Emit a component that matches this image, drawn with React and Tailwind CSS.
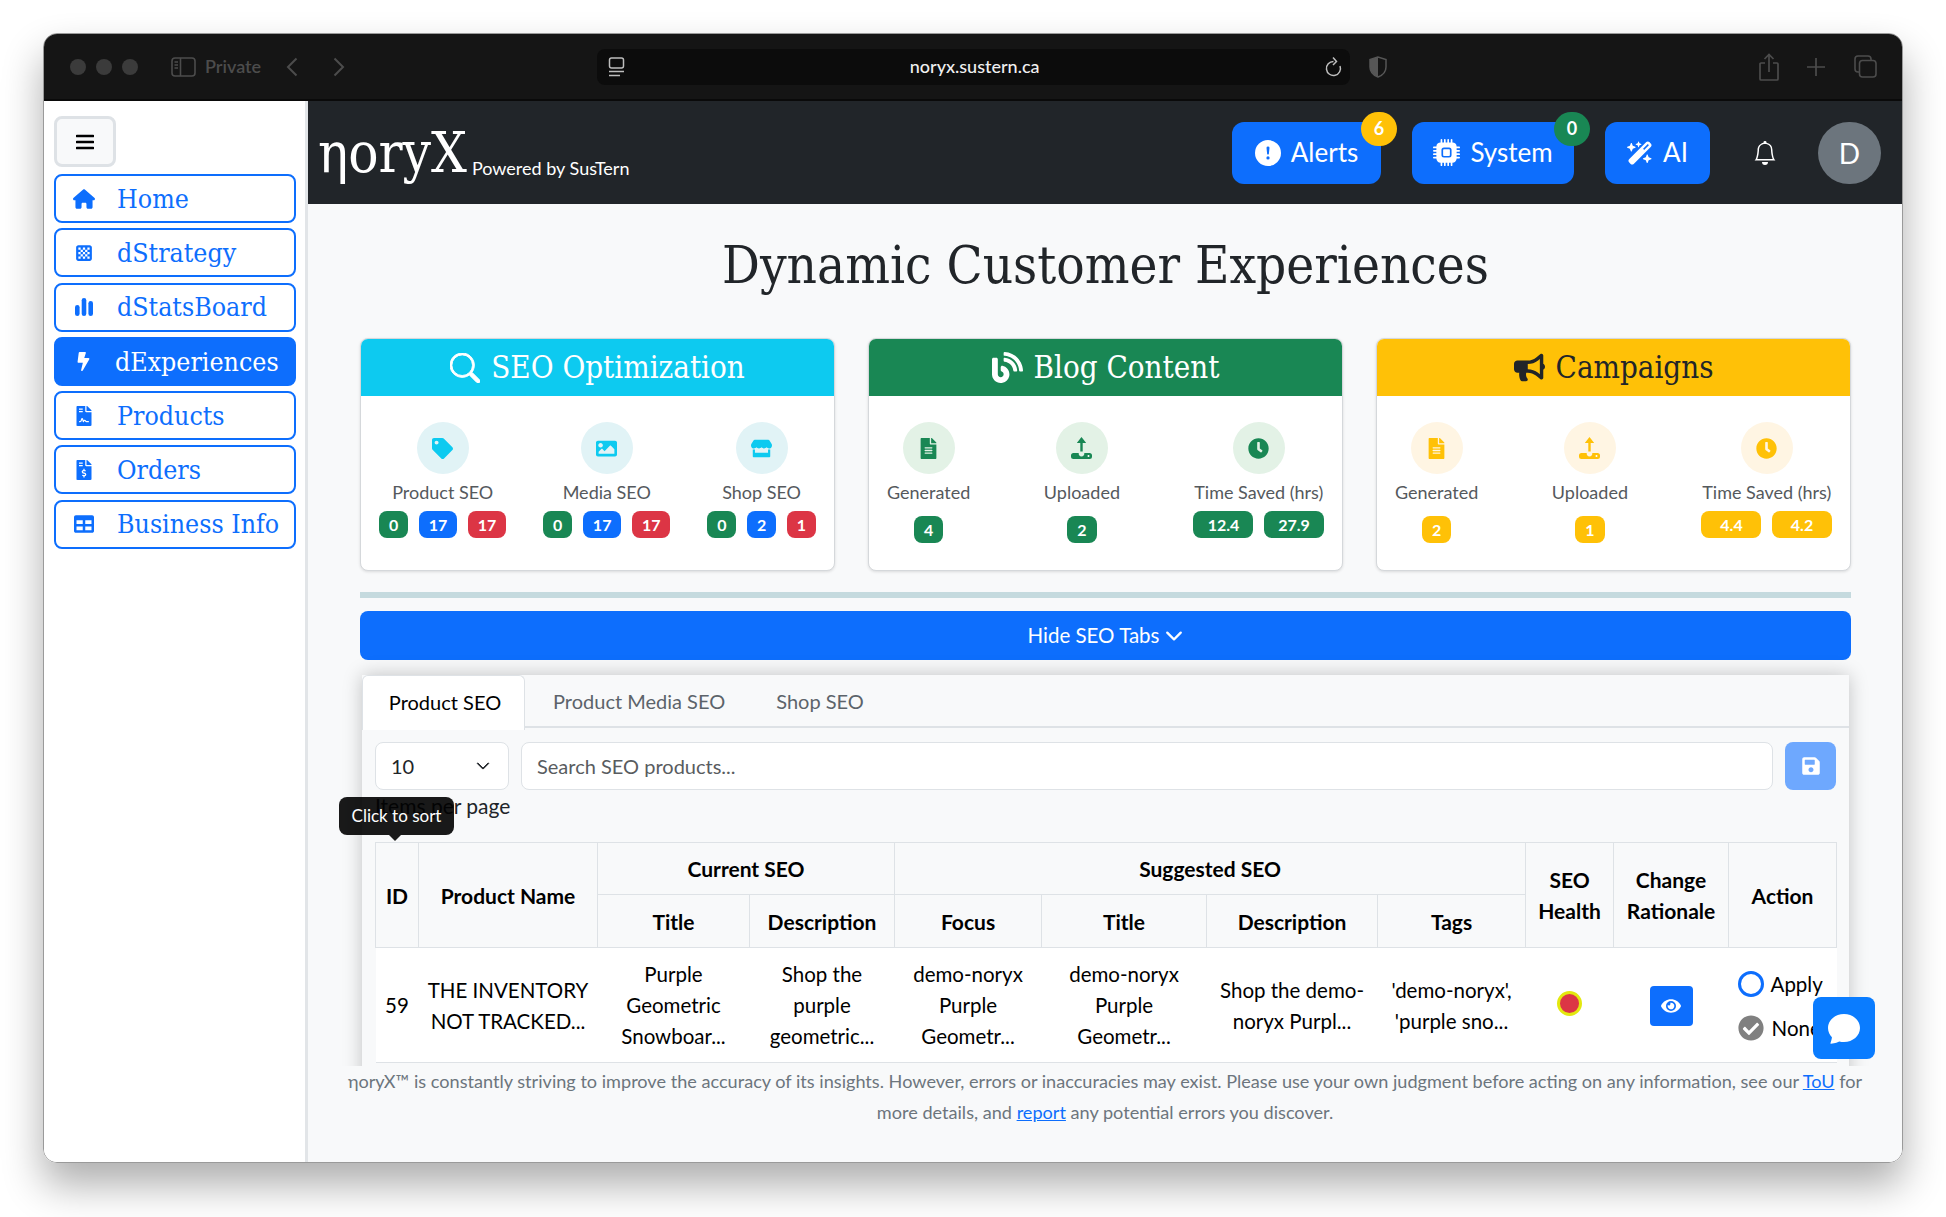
import { FaTag, FaImage, FaStore, FaFileAlt, FaClock, FaBlog, FaBullhorn, FaSave, FaEye, FaCheckCircle, FaFileContract, FaFileInvoiceDollar, FaTable, FaBolt } from 'react-icons/fa';
import { FaHouse, FaChessBoard, FaWandMagicSparkles } from 'react-icons/fa6';
import { BsBell, BsSearch, BsChevronDown, BsChatFill, BsCpuFill, BsExclamationCircleFill } from 'react-icons/bs';

const serif = "[font-family:'DejaVu_Serif_Condensed','DejaVu_Serif',serif]";

const nav = [
    { label: 'Home', icon: <FaHouse size={22} /> },
    { label: 'dStrategy', icon: <FaChessBoard size={18} /> },
    { label: 'dStatsBoard', icon: <StatsIcon /> },
    { label: 'dExperiences', icon: <FaBolt size={19} />, active: true },
    { label: 'Products', icon: <FaFileContract size={20} /> },
    { label: 'Orders', icon: <FaFileInvoiceDollar size={20} /> },
    { label: 'Business Info', icon: <FaTable size={20} /> },
];

function StatsIcon() {
    return (
        <svg width="18" height="18" viewBox="0 0 18 18" fill="currentColor">
            <rect x="0" y="7" width="4.6" height="11" rx="2.3" />
            <rect x="6.7" y="0" width="4.6" height="18" rx="2.3" />
            <rect x="13.4" y="3" width="4.6" height="15" rx="2.3" />
        </svg>
    );
}

function UploadIcon() {
    return (
        <svg width="21" height="22" viewBox="0 0 21 22" fill="currentColor">
            <path d="M9.300 14.500V6H5.800L10.500 0l4.700 6h-3.500v8.500z" />
            <path d="M2.500 16h5.200v.6a2.800 2.800 0 0 0 5.600 0V16h5.200a2.500 2.500 0 0 1 2.500 2.500v1a2.500 2.500 0 0 1-2.500 2.500h-16A2.500 2.500 0 0 1 0 19.500v-1A2.500 2.500 0 0 1 2.500 16z" />
            <circle cx="17.500" cy="19" r="1" fill="#fff" />
        </svg>
    );
}

function Toolbar() {
    return (
        <div className="flex h-[67px] flex-none items-center border-b-2 border-[#0a0a0a] bg-[#151515] text-[#4c4c4c]">
            <span className="ml-[26px] h-4 w-4 rounded-full bg-[#3b3b3b]" />
            <span className="ml-[10px] h-4 w-4 rounded-full bg-[#3b3b3b]" />
            <span className="ml-[10px] h-4 w-4 rounded-full bg-[#3b3b3b]" />
            <svg className="ml-[33px]" width="25" height="20" viewBox="0 0 25 20" fill="none" stroke="currentColor" strokeWidth="1.6">
                <rect x="1" y="1" width="23" height="18" rx="3" />
                <path d="M9.5 1v18M3.5 5h3.5M3.5 8h3.5M3.5 11h3.5" />
            </svg>
            <span className="ml-[9px] text-[18px] font-semibold">Private</span>
            <svg className="ml-[25px]" width="12" height="20" viewBox="0 0 12 20" fill="none" stroke="currentColor" strokeWidth="2"><path d="M10.5 1.5 2 10l8.5 8.5" /></svg>
            <svg className="ml-[35px]" width="12" height="20" viewBox="0 0 12 20" fill="none" stroke="currentColor" strokeWidth="2"><path d="M1.5 1.5 10 10l-8.5 8.5" /></svg>
            <div className="ml-[252px] flex h-[36px] w-[753px] items-center justify-between rounded-lg bg-[#0c0c0c] pl-[11px] pr-[8px] text-[#bdbdbd]">
                <svg width="17" height="20" viewBox="0 0 17 20" fill="none" stroke="currentColor" strokeWidth="1.5">
                    <rect x="1.5" y="1" width="14" height="10" rx="2" />
                    <path d="M1 14.5h15M1 18.5h11" />
                </svg>
                <span className="text-[18px] font-medium text-[#f0f0f0]">noryx.sustern.ca</span>
                <svg width="18" height="22" viewBox="0 0 18 22" fill="none" stroke="currentColor" strokeWidth="1.5">
                    <path d="M9.5 5.5a7 7 0 1 0 6.5 4.5M9 1.5l3.5 4-3.5 3.5" />
                </svg>
            </div>
            <svg className="ml-[19px]" width="18" height="22" viewBox="0 0 18 22">
                <path d="M9 1 1 3.5V11c0 5 4 8.500 8 10 4-1.500 8-5 8-10V3.500z" fill="none" stroke="#565656" strokeWidth="1.500" />
                <path d="M9 1 1 3.500V11c0 5 4 8.500 8 10z" fill="#565656" />
            </svg>
            <svg className="ml-auto" width="20" height="28" viewBox="0 0 20 28" fill="none" stroke="currentColor" strokeWidth="1.7">
                <path d="M6 10H2a1 1 0 0 0-1 1v15a1 1 0 0 0 1 1h16a1 1 0 0 0 1-1V11a1 1 0 0 0-1-1h-4M10 19V1.500M5.500 6 10 1.500 14.500 6" />
            </svg>
            <svg className="ml-[28px]" width="18" height="18" viewBox="0 0 18 18" fill="none" stroke="currentColor" strokeWidth="1.700"><path d="M9 0v18M0 9h18" /></svg>
            <svg className="ml-[29px] mr-[25px]" width="23" height="23" viewBox="0 0 23 23" fill="none" stroke="currentColor" strokeWidth="1.600">
                <rect x="5.500" y="5.500" width="16.500" height="16.500" rx="3" />
                <path d="M5.500 17H4a3 3 0 0 1-3-3V4a3 3 0 0 1 3-3h10a3 3 0 0 1 3 3v1.500" />
            </svg>
        </div>
    );
}

function Sidebar() {
    return (
        <aside className="flex w-[264px] flex-none flex-col border-r-[3px] border-[#e2e5e8] bg-white pl-[10px] pt-[15px]">
            <button className="flex h-[51px] w-[62px] items-center justify-center rounded-lg border-[3px] border-[#dee2e6] bg-[#f8f9fa] text-black">
                <svg width="18" height="16" viewBox="0 0 18 16" fill="none" stroke="currentColor" strokeWidth="2.600" strokeLinecap="round">
                    <path d="M1 2h16M1 8h16M1 14h16" />
                </svg>
            </button>
            <div className="mt-[7px] flex w-[242px] flex-col gap-[5.300px]">
                {nav.map(n => (
                    <div key={n.label} className={`flex h-[49px] items-center rounded-lg border-2 border-[#0d6efd] ${n.active ? 'bg-[#0d6efd] text-white' : 'bg-white text-[#0d6efd]'}`}>
                        <span className="flex w-[61px] flex-none justify-center pr-[6px]">{n.icon}</span>
                        <span className={`${serif} text-[26.500px] ${n.active ? '-ml-[2px]' : ''}`}>{n.label}</span>
                    </div>
                ))}
            </div>
        </aside>
    );
}

function HeaderBtn({ icon, label, width, badge, badgeColor }) {
    return (
        <div className={`relative flex h-[62px] items-center justify-center gap-[10px] rounded-xl bg-[#0d6efd] text-[26px] text-white ${width}`}>
            {icon}
            <span>{label}</span>
            {badge !== undefined && (
                <span className={`absolute -right-[16px] -top-[10px] flex h-[34px] w-[36px] items-center justify-center rounded-full text-[18px] font-bold ${badgeColor}`}>{badge}</span>
            )}
        </div>
    );
}

function Header() {
    return (
        <header className="flex h-[103px] flex-none items-center bg-[#212529] pr-[21px] text-white">
            <div className="ml-[10px] flex items-baseline">
                <span className={`${serif} text-[56px] leading-none`}>ηoryX</span>
                <span className="ml-[5px] translate-y-[3px] text-[18px]">Powered by SusTern</span>
            </div>
            <div className="ml-auto flex items-center">
                <HeaderBtn icon={<BsExclamationCircleFill size={26} />} label="Alerts" width="w-[149px]" badge={6} badgeColor="bg-[#ffc107]" />
                <div className="ml-[31px]"><HeaderBtn icon={<BsCpuFill size={27} />} label="System" width="w-[162px]" badge={0} badgeColor="bg-[#198754]" /></div>
                <div className="ml-[31px]"><HeaderBtn icon={<FaWandMagicSparkles size={26} />} label="AI" width="w-[105px]" /></div>
                <BsBell className="ml-[43px]" size={24} />
                <div className="ml-[41px] flex h-[62px] w-[63px] items-center justify-center rounded-full bg-[#6c757d] text-[28px]">D</div>
            </div>
        </header>
    );
}

function Badge({ children, color, wide }) {
    return <span className={`flex h-[27px] items-center justify-center rounded-lg text-[16px] font-bold text-white ${color} ${wide || 'min-w-[29px] px-[10px]'}`}>{children}</span>;
}

function Stat({ icon, label, circle, iconColor, badges }) {
    return (
        <div className="flex flex-col items-center">
            <span className={`flex h-[52px] w-[52px] items-center justify-center rounded-full text-[21px] ${circle} ${iconColor}`}>{icon}</span>
            <span className="mt-[5px] h-[26px] whitespace-nowrap text-[18px] leading-[26px] text-[#55595d]">{label}</span>
            <div className={`flex gap-[10.500px] ${badges.length === 1 ? 'mt-[11px]' : 'mt-[6px]'}`}>{badges}</div>
        </div>
    );
}

function Card({ title, icon, head, children }) {
    return (
        <div className="h-[233px] overflow-hidden rounded-lg border border-[#d5d8db] bg-white shadow-[0_1px_3px_rgba(0,0,0,.12)]">
            <div className={`flex h-[57px] items-center justify-center gap-[11px] ${head}`}>
                {icon}
                <span className={`${serif} text-[31px]`}>{title}</span>
            </div>
            <div className="flex justify-between px-[18px] pt-[26px]">{children}</div>
        </div>
    );
}

function Cards() {
    const cyan = { circle: 'bg-[#e1f3f6]', iconColor: 'text-[#0dcaf0]' };
    const green = { circle: 'bg-[#e3f2e6]', iconColor: 'text-[#198754]' };
    const yellow = { circle: 'bg-[#fff5e3]', iconColor: 'text-[#ffc107]' };
    const g = 'bg-[#198754]', b = 'bg-[#0d6efd]', r = 'bg-[#dc3545]', y = 'bg-[#ffc107]';
    return (
        <div className="grid grid-cols-3 gap-[33px]">
            <Card title="SEO Optimization" head="bg-[#0dcaf0] text-white" icon={<BsSearch size={30} strokeWidth={0.5} />}>
                <Stat {...cyan} icon={<FaTag />} label="Product SEO" badges={[<Badge key="a" color={g}>0</Badge>, <Badge key="b" color={b}>17</Badge>, <Badge key="c" color={r}>17</Badge>]} />
                <Stat {...cyan} icon={<FaImage />} label="Media SEO" badges={[<Badge key="a" color={g}>0</Badge>, <Badge key="b" color={b}>17</Badge>, <Badge key="c" color={r}>17</Badge>]} />
                <Stat {...cyan} icon={<FaStore />} label="Shop SEO" badges={[<Badge key="a" color={g}>0</Badge>, <Badge key="b" color={b}>2</Badge>, <Badge key="c" color={r}>1</Badge>]} />
            </Card>
            <Card title="Blog Content" head="bg-[#198754] text-white" icon={<FaBlog size={31} />}>
                <Stat {...green} icon={<FaFileAlt />} label="Generated" badges={[<Badge key="a" color={g}>4</Badge>]} />
                <Stat {...green} icon={<UploadIcon />} label="Uploaded" badges={[<Badge key="a" color={g}>2</Badge>]} />
                <Stat {...green} icon={<FaClock />} label="Time Saved (hrs)" badges={[<Badge key="a" color={g} wide="w-[60px]">12.4</Badge>, <Badge key="b" color={g} wide="w-[60px]">27.9</Badge>]} />
            </Card>
            <Card title="Campaigns" head="bg-[#ffc107] text-[#212529]" icon={<FaBullhorn size={31} />}>
                <Stat {...yellow} icon={<FaFileAlt />} label="Generated" badges={[<Badge key="a" color={y}>2</Badge>]} />
                <Stat {...yellow} icon={<UploadIcon />} label="Uploaded" badges={[<Badge key="a" color={y}>1</Badge>]} />
                <Stat {...yellow} icon={<FaClock />} label="Time Saved (hrs)" badges={[<Badge key="a" color={y} wide="w-[60px]">4.4</Badge>, <Badge key="b" color={y} wide="w-[60px]">4.2</Badge>]} />
            </Card>
        </div>
    );
}

function SeoTable() {
    const th = 'border border-[#dee2e6] bg-[#f8f9fa] px-[4px] align-middle text-[21px] font-bold text-black leading-[31px]';
    const td = 'whitespace-nowrap border-b border-[#dee2e6] bg-white px-[4px] pb-[10px] pt-[11px] text-center align-middle text-[20.500px] text-black leading-[31px]';
    return (
        <table className="w-[1461px] table-fixed border-collapse text-center">
            <colgroup>
                <col className="w-[43px]" />
                <col className="w-[179px]" />
                <col className="w-[152px]" />
                <col className="w-[145px]" />
                <col className="w-[147px]" />
                <col className="w-[165px]" />
                <col className="w-[171px]" />
                <col className="w-[148px]" />
                <col className="w-[88px]" />
                <col className="w-[115px]" />
                <col className="w-[108px]" />
            </colgroup>
            <thead>
                <tr className="h-[52px]">
                    <th rowSpan="2" className={th}>ID</th>
                    <th rowSpan="2" className={th}>Product Name</th>
                    <th colSpan="2" className={th}>Current SEO</th>
                    <th colSpan="4" className={th}>Suggested SEO</th>
                    <th rowSpan="2" className={th}>SEO<br />Health</th>
                    <th rowSpan="2" className={th}>Change<br />Rationale</th>
                    <th rowSpan="2" className={th}>Action</th>
                </tr>
                <tr className="h-[53px]">
                    <th className={th}>Title</th>
                    <th className={th}>Description</th>
                    <th className={th}>Focus</th>
                    <th className={th}>Title</th>
                    <th className={th}>Description</th>
                    <th className={th}>Tags</th>
                </tr>
            </thead>
            <tbody>
                <tr>
                    <td className={td}>59</td>
                    <td className={td}>THE INVENTORY<br />NOT TRACKED...</td>
                    <td className={td}>Purple<br />Geometric<br />Snowboar...</td>
                    <td className={td}>Shop the<br />purple<br />geometric...</td>
                    <td className={td}>demo-noryx<br />Purple<br />Geometr...</td>
                    <td className={td}>demo-noryx<br />Purple<br />Geometr...</td>
                    <td className={td}>Shop the demo-<br />noryx Purpl...</td>
                    <td className={td}>'demo-noryx',<br />'purple sno...</td>
                    <td className={td}>
                        <span className="-mt-[8px] inline-block h-[25px] w-[25px] rounded-full border-[3px] border-[#e3e80f] bg-[#dc3545] align-middle" />
                    </td>
                    <td className={td}>
                        <span className="inline-flex h-[40px] w-[43px] items-center justify-center rounded bg-[#0d6efd] align-middle text-white"><FaEye size={20} /></span>
                    </td>
                    <td className={`${td} !px-0`}>
                        <div className="flex flex-col gap-[18px] overflow-hidden pl-[9px] text-left">
                            <div className="flex items-center gap-[7px] whitespace-nowrap leading-[26px]">
                                <span className="h-[26px] w-[26px] flex-none rounded-full border-[3px] border-[#0d6efd] bg-white" />Apply
                            </div>
                            <div className="flex items-center gap-[8px] whitespace-nowrap leading-[26px]">
                                <FaCheckCircle className="flex-none text-[#808080]" size={26} />None
                            </div>
                        </div>
                    </td>
                </tr>
            </tbody>
        </table>
    );
}

function SeoPanel() {
    return (
        <div className="relative mx-[2px] mt-[15px] h-[500px] bg-[#f8f9fa] shadow-[0_0_18px_rgba(0,0,0,.22)]">
            <div className="flex h-[53px] border-b-2 border-[#dee2e6] text-[20px]">
                <div className="-mb-[2px] flex h-[55px] w-[163px] items-center justify-center rounded-t-md border-x border-t border-[#dee2e6] bg-white pb-[3px] pl-[3px] text-black">Product SEO</div>
                <div className="ml-[28px] flex items-center text-[#5c636a]">Product Media SEO</div>
                <div className="ml-[51px] flex items-center text-[#5c636a]">Shop SEO</div>
            </div>
            <div className="px-[13px]">
                <div className="mt-[14px] flex gap-[12px]">
                    <div className="flex h-[48px] w-[134px] items-center justify-between rounded-lg border border-[#dee2e6] bg-white pl-[15px] pr-[18px] text-[20px] text-[#212529]">
                        10<BsChevronDown size={14} strokeWidth={1} />
                    </div>
                    <div className="flex h-[48px] flex-1 items-center rounded-lg border border-[#dee2e6] bg-white pl-[15px] text-[20px] text-[#595c5f]">Search SEO products...</div>
                    <div className="flex h-[48px] w-[51px] items-center justify-center rounded-lg bg-[#6ea8fe] text-white"><FaSave size={20} /></div>
                </div>
                <div className="h-[36px] w-[134px] whitespace-nowrap text-center text-[21px] leading-[31px] text-[#212529]">Items per page</div>
                <div className="mt-[16px]"><SeoTable /></div>
            </div>
            <div className="absolute left-[-23px] top-[122px] flex h-[38px] w-[115px] items-center justify-center rounded-lg bg-black/90 text-[17px] text-white">
                Click to sort
                <span className="absolute -bottom-[6px] left-[50px] h-0 w-0 border-x-[6px] border-t-[6px] border-x-transparent border-t-black/90" />
            </div>
        </div>
    );
}

export default function App() {
    return (
        <div className="h-[1217px] w-[1946px] overflow-hidden bg-white pl-[43px] pt-[33px] font-['Lato',sans-serif]">
            <div className="flex h-[1130px] w-[1860px] flex-col overflow-hidden rounded-[14px] border border-[#9a9a9a] shadow-[0_22px_40px_rgba(0,0,0,.32)]">
                <Toolbar />
                <div className="flex min-h-0 flex-1">
                    <Sidebar />
                    <main className="relative flex min-w-0 flex-1 flex-col bg-[#f8f9fa]">
                        <Header />
                        <div className="h-[862px] flex-none overflow-hidden pl-[52px] pr-[51px]">
                            <h1 className={`${serif} mb-[12px] h-[122px] text-center text-[52.500px] leading-[122px] text-[#212529]`}>Dynamic Customer Experiences</h1>
                            <Cards />
                            <div className="mt-[21px] h-[6px] bg-[#c5dade]" />
                            <div className="mt-[13px] flex h-[49px] items-center justify-center gap-[6px] rounded-lg bg-[#0d6efd] text-[20.500px] text-white">
                                Hide SEO Tabs <BsChevronDown size={18} strokeWidth={1} />
                            </div>
                            <SeoPanel />
                        </div>
                        <footer className="px-[10px] text-center text-[18.120px] leading-[31px] text-[#6c757d]">
                            ηoryX™ is constantly striving to improve the accuracy of its insights. However, errors or inaccuracies may exist. Please use your own judgment before acting on any information, see our <a className="text-[#0d6efd] underline">ToU</a> for<br />more details, and <a className="text-[#0d6efd] underline">report</a> any potential errors you discover.
                        </footer>
                        <div className="absolute left-[1505px] top-[896px] flex h-[62px] w-[62px] items-center justify-center rounded-lg bg-[#0a7cff] text-white"><BsChatFill size={32} /></div>
                    </main>
                </div>
            </div>
        </div>
    );
}
